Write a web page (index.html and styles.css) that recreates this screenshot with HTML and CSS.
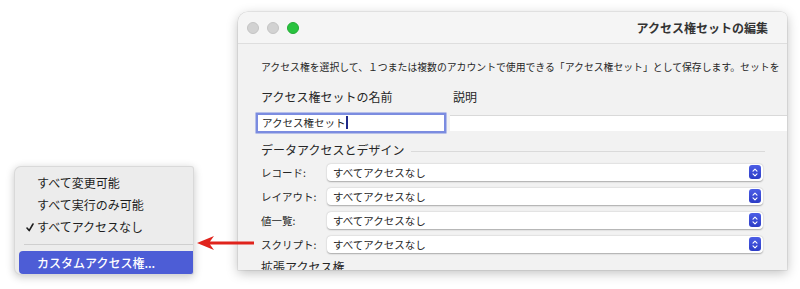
FILE: index.html
```html
<!DOCTYPE html>
<html lang="ja">
<head>
    <meta charset="UTF-8">
    <title>アクセス権セットの編集</title>
    <link rel="stylesheet" href="styles.css">
</head>
<body>
    <div class="stage">
        <div class="menu">
            <div class="menu-item">すべて変更可能</div>
            <div class="menu-item">すべて実行のみ可能</div>
            <div class="menu-item">
                <svg class="check" width="8" height="9" viewBox="0 0 8 9"><path d="M1 5 L3.2 7.6 L7 1" fill="none" stroke="#1e1e1e" stroke-width="1.6" stroke-linecap="round" stroke-linejoin="round"/></svg>
                すべてアクセスなし
            </div>
            <div class="menu-sep"></div>
            <div class="menu-item selected">カスタムアクセス権...</div>
        </div>

        <div class="window">
            <div class="titlebar">
                <div class="lights">
                    <span class="light"></span>
                    <span class="light"></span>
                    <span class="light green"></span>
                </div>
                <div class="title">アクセス権セットの編集</div>
            </div>

            <div class="content">
                <p class="intro">アクセス権を選択して、１つまたは複数のアカウントで使用できる「アクセス権セット」として保存します。セットを</p>

                <div class="name-row">
                    <div class="name-col">
                        <div class="field-label">アクセス権セットの名前</div>
                        <div class="text-field focused">アクセス権セット<span class="caret"></span></div>
                    </div>
                    <div class="desc-col">
                        <div class="field-label">説明</div>
                        <div class="text-field wide"></div>
                    </div>
                </div>

                <div class="group-head"><span>データアクセスとデザイン</span><span class="rule"></span></div>

                <div class="rows">
                    <div class="row">
                        <span class="row-label">レコード:</span>
                        <div class="popup">すべてアクセスなし<span class="stepper"><svg width="6" height="9" viewBox="0 0 6 9"><path d="M1 3.2 L3 1.2 L5 3.2 M1 5.8 L3 7.8 L5 5.8" fill="none" stroke="#fff" stroke-width="1.1" stroke-linecap="round" stroke-linejoin="round"/></svg></span></div>
                    </div>
                    <div class="row">
                        <span class="row-label">レイアウト:</span>
                        <div class="popup">すべてアクセスなし<span class="stepper"><svg width="6" height="9" viewBox="0 0 6 9"><path d="M1 3.2 L3 1.2 L5 3.2 M1 5.8 L3 7.8 L5 5.8" fill="none" stroke="#fff" stroke-width="1.1" stroke-linecap="round" stroke-linejoin="round"/></svg></span></div>
                    </div>
                    <div class="row">
                        <span class="row-label">値一覧:</span>
                        <div class="popup">すべてアクセスなし<span class="stepper"><svg width="6" height="9" viewBox="0 0 6 9"><path d="M1 3.2 L3 1.2 L5 3.2 M1 5.8 L3 7.8 L5 5.8" fill="none" stroke="#fff" stroke-width="1.1" stroke-linecap="round" stroke-linejoin="round"/></svg></span></div>
                    </div>
                    <div class="row">
                        <span class="row-label">スクリプト:</span>
                        <div class="popup">すべてアクセスなし<span class="stepper"><svg width="6" height="9" viewBox="0 0 6 9"><path d="M1 3.2 L3 1.2 L5 3.2 M1 5.8 L3 7.8 L5 5.8" fill="none" stroke="#fff" stroke-width="1.1" stroke-linecap="round" stroke-linejoin="round"/></svg></span></div>
                    </div>
                </div>

                <div class="group-head">拡張アクセス権</div>
            </div>
        </div>

        <svg class="arrow" width="57" height="16" viewBox="0 0 57 16">
            <path d="M0 8 L17 1 L13 6.5 L57 6.5 L57 9.5 L13 9.5 L17 15 Z" fill="#e0231c"/>
        </svg>
    </div>
</body>
</html>
```

FILE: styles.css
```css
* {
    margin: 0;
    padding: 0;
    box-sizing: border-box;
}

body {
    font-family: "Noto Sans CJK JP", "Noto Sans", sans-serif;
    background: #fff;
    color: #262626;
}

.stage {
    position: relative;
    width: 800px;
    height: 289px;
    overflow: hidden;
    display: flex;
    align-items: flex-start;
}

/* popup menu */
.menu {
    margin: 166px 0 0 14px;
    width: 180px;
    height: 109px;
    padding: 5px 0 2px;
    background: #ececec;
    border: 1px solid rgba(0, 0, 0, 0.08);
    border-radius: 7px 3px 3px 7px;
    box-shadow: 0 2px 8px rgba(0, 0, 0, 0.22);
    overflow: hidden;
}

.menu-item {
    position: relative;
    height: 22px;
    line-height: 22px;
    padding-left: 22px;
    font-size: 12px;
    color: #1e1e1e;
    white-space: nowrap;
}

.check {
    position: absolute;
    left: 11px;
    top: 7px;
}

.menu-sep {
    height: 1px;
    margin: 6px 0 6px 9px;
    background: #cfcfcf;
}

.menu-item.selected {
    height: 23px;
    line-height: 23px;
    margin-left: 4px;
    padding-left: 18px;
    background: #4d5dd6;
    border-radius: 4px 0 0 4px;
    color: #fff;
    font-weight: 500;
}

/* window */
.window {
    margin: 12px 0 0 44px;
    width: 549px;
    height: 258px;
    background: #f2f2f2;
    border-radius: 10px 6px 0 0;
    box-shadow: 0 3px 12px rgba(0, 0, 0, 0.25), 0 0 0 0.5px rgba(0, 0, 0, 0.12);
    overflow: hidden;
}

.titlebar {
    height: 32px;
    display: flex;
    align-items: center;
    justify-content: space-between;
    padding: 0 19px 0 9px;
    background: #f5f5f5;
    border-bottom: 1px solid #dedede;
}

.lights {
    display: flex;
    gap: 8px;
}

.light {
    width: 12px;
    height: 12px;
    border-radius: 50%;
    background: #d2d2d2;
    border: 0.5px solid #c4c4c4;
}

.light.green {
    background: #29c33f;
    border-color: #22ab35;
}

.title {
    font-size: 12px;
    font-weight: 700;
    color: #333;
}

.content {
    padding-left: 23px;
}

.intro {
    margin-top: 16px;
    font-size: 9.85px;
    line-height: 14px;
    white-space: nowrap;
}

.name-row {
    display: flex;
    margin-top: 15px;
}

.name-col {
    width: 192px;
    flex-shrink: 0;
}

.desc-col {
    flex: 1;
}

.field-label {
    font-size: 12px;
    line-height: 16px;
}

.text-field {
    height: 16px;
    margin: 10px 0 0 -3px;
    padding-left: 4px;
    font-size: 10.5px;
    line-height: 16px;
    background: #fff;
    white-space: nowrap;
}

.text-field.focused {
    width: 186px;
    box-shadow: 0 0 0 2.5px #7b8ce0;
}

.text-field.wide {
    width: 400px;
    border-top: 1px solid #d9d9d9;
}

.caret {
    display: inline-block;
    width: 1.5px;
    height: 13px;
    margin-left: 1px;
    vertical-align: -2px;
    background: #1f2a8a;
}

.group-head {
    display: flex;
    align-items: center;
    gap: 7px;
    margin-top: 11px;
    font-size: 12px;
    line-height: 16px;
    white-space: nowrap;
}

.rule {
    flex: 1;
    height: 1px;
    margin: 3px 22px 0 0;
    background: #dadada;
}

.rows {
    margin-top: 2px;
}

.row {
    display: flex;
    align-items: center;
    height: 24px;
}

.row-label {
    width: 66px;
    flex-shrink: 0;
    font-size: 10.5px;
}

.popup {
    position: relative;
    width: 436px;
    height: 17px;
    padding-left: 6px;
    font-size: 10.5px;
    line-height: 17px;
    background: #fff;
    border-radius: 4px;
    box-shadow: 0 0.5px 1.5px rgba(0, 0, 0, 0.3);
}

.stepper {
    position: absolute;
    right: 2px;
    top: 1.5px;
    width: 12px;
    height: 14px;
    display: flex;
    align-items: center;
    justify-content: center;
    border-radius: 3px;
    background: linear-gradient(#4c5ee6, #2c3cc6);
}

.group-head + .rows + .group-head {
    margin-top: 3px;
}

.arrow {
    position: absolute;
    left: 197px;
    top: 235px;
}
```
